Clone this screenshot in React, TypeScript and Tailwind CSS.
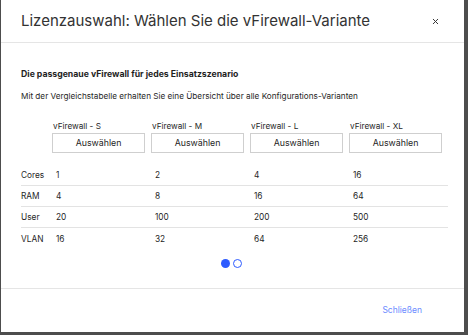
import { X } from "lucide-react";

const variants = ["vFirewall - S", "vFirewall - M", "vFirewall - L", "vFirewall - XL"];

const rows: [string, string[]][] = [
  ["Cores", ["1", "2", "4", "16"]],
  ["RAM", ["4", "8", "16", "64"]],
  ["User", ["20", "100", "200", "500"]],
  ["VLAN", ["16", "32", "64", "256"]],
];

const App = () => {
  return (
    <div className="w-[468px] h-[335px] bg-[#4d4d4d] font-['Inter',sans-serif] text-[#1f1f1f]">
      <div className="ml-[1px] w-[463px] h-[332px] bg-white flex flex-col">
        <header className="h-[43px] flex items-center justify-between pl-[20px] pr-[24px] border-b border-[#e5e5e5]">
          <h1 className="text-[15px] text-[#333] font-normal">
            Lizenzauswahl: Wählen Sie die vFirewall-Variante
          </h1>
          <button className="text-[#333]">
            <X size={9} strokeWidth={2.6} />
          </button>
        </header>

        <div className="flex-1 px-[20px] pt-[25px]">
          <p className="text-[8.7px] font-bold leading-[12px]">
            Die passgenaue vFirewall für jedes Einsatzszenario
          </p>
          <p className="mt-[10px] text-[8.2px] leading-[12px]">
            Mit der Vergleichstabelle erhalten Sie eine Übersicht über alle Konfigurations-Varianten
          </p>

          <div className="mt-[18px] grid grid-cols-[31px_repeat(4,99px)] w-[427px]">
            <div />
            {variants.map((v) => (
              <div key={v} className="pr-[6px]">
                <div className="text-[8.2px] leading-[12px] pl-[1px]">{v}</div>
                <button className="block mt-[1px] w-full h-[20px] border border-[#cfcfcf] text-[8.8px] leading-[18px] text-[#1f1f1f]">
                  Auswählen
                </button>
              </div>
            ))}
          </div>

          <div className="mt-[12px] w-[427px]">
            {rows.map(([label, vals], i) => (
              <div
                key={label}
                className={`grid grid-cols-[31px_repeat(4,99px)] h-[21px] items-center text-[8.3px] leading-[12px] ${
                  i < rows.length - 1 ? "border-b border-[#e3e3e3]" : ""
                }`}
              >
                <div>{label}</div>
                {vals.map((v, j) => (
                  <div key={j} className="pl-[4px]">
                    {v}
                  </div>
                ))}
              </div>
            ))}
          </div>

          <div className="mt-[10px] flex justify-center gap-[3px] pr-[3px]">
            <span className="w-[9px] h-[9px] rounded-full bg-[#2d5bff]" />
            <span className="w-[9px] h-[9px] rounded-full border-[1.5px] border-[#2d5bff]" />
          </div>
        </div>

        <footer className="h-[44px] border-t border-[#e5e5e5] flex items-center justify-end pr-[42px]">
          <button className="text-[8.5px] text-[#6b8bff]">Schließen</button>
        </footer>
      </div>
    </div>
  );
};

export default App;
